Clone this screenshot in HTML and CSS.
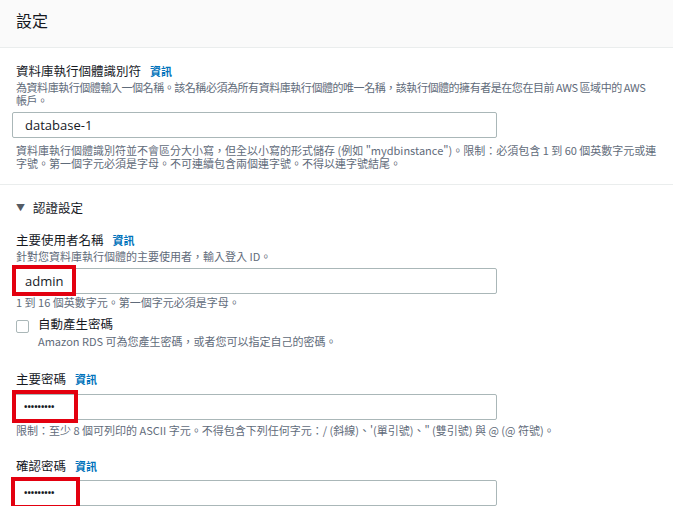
FILE: index.html
```html
<!DOCTYPE html>
<html lang="zh-Hant">
<head>
<meta charset="utf-8">
<link rel="stylesheet" href="styles.css">
</head>
<body>
<div class="hd"><h2 class="title">設定</h2></div>

<section class="sec sec1">
  <div class="label">資料庫執行個體識別符<a class="info">資訊</a></div>
  <div class="desc desc-tight">為資料庫執行個體輸入一個名稱。該名稱必須為所有資料庫執行個體的唯一名稱，該執行個體的擁有者是在您在目前 AWS 區域中的 AWS 帳戶。</div>
  <div class="field"><div class="input">database-1</div></div>
  <div class="help help-id">資料庫執行個體識別符並不會區分大小寫，但全以小寫的形式儲存 (例如 "mydbinstance")。限制：必須包含 1 到 60 個英數字元或連字號。第一個字元必須是字母。不可連續包含兩個連字號。不得以連字號結尾。</div>
</section>

<section class="sec sec2">
  <div class="expander"><span class="caret">▼</span>認證設定</div>

  <div class="label l-user">主要使用者名稱<a class="info">資訊</a></div>
  <div class="desc">針對您資料庫執行個體的主要使用者，輸入登入 ID。</div>
  <div class="field"><div class="input">admin</div><span class="mark mark-user"></span></div>
  <div class="help help-user">1 到 16 個英數字元。第一個字元必須是字母。</div>

  <div class="check">
    <span class="box"></span>
    <div class="check-text">
      <div class="check-label">自動產生密碼</div>
      <div class="desc">Amazon RDS 可為您產生密碼，或者您可以指定自己的密碼。</div>
    </div>
  </div>

  <div class="label l-pw">主要密碼<a class="info">資訊</a></div>
  <div class="field"><div class="input dots">•••••••••</div><span class="mark mark-pw"></span></div>
  <div class="help help-pw">限制：至少 8 個可列印的 ASCII 字元。不得包含下列任何字元：/ (斜線)、'(單引號)、" (雙引號) 與 @ (@ 符號)。</div>

  <div class="label l-cf">確認密碼<a class="info">資訊</a></div>
  <div class="field"><div class="input dots">•••••••••</div><span class="mark mark-cf"></span></div>
</section>
</body>
</html>
```
FILE: styles.css
```css
* { box-sizing: border-box; }
html, body { margin: 0; background: #fff; }
body {
  font-family: "Noto Sans CJK TC", "Open Sans", "Liberation Sans", sans-serif;
  color: #16191f;
  width: 673px;
  overflow: hidden;
}
.hd {
  height: 48px;
  background: #fafafa;
  border-bottom: 1px solid #eaeded;
  padding: 9px 16px 0;
}
.title {
  margin: 0;
  font-size: 16px;
  font-weight: 400;
  line-height: 22px;
}
.sec { padding: 0 16px; }
.sec1 {
  padding-top: 13px;
  padding-bottom: 14px;
  border-bottom: 1px solid #eaeded;
}
.label {
  font-size: 12.5px;
  line-height: 20px;
  display: flex;
  align-items: baseline;
}
.info {
  color: #0073bb;
  font-size: 11px;
  font-weight: 700;
  margin-left: 9px;
}
.desc, .help {
  font-size: 11px;
  line-height: 13px;
  color: #5f6b7a;
}
.desc-tight { letter-spacing: -0.45px; }
.field {
  position: relative;
  width: 485px;
  margin-left: -4px;
  margin-top: 5px;
}
.input {
  height: 26px;
  border: 1px solid #aab7b8;
  border-radius: 2px;
  padding: 0 12px;
  font-size: 13px;
  line-height: 24px;
  color: #16191f;
  font-family: "Open Sans", "Noto Sans CJK TC", sans-serif;
}
.input.dots {
  font-size: 9px;
  font-weight: 700;
  line-height: 24px;
  padding-left: 11px;
}
.help { margin-top: 5px; }
.help-id { margin-top: 6px; }
.mark {
  position: absolute;
  border: 4px solid #e3000f;
}
.mark-user { left: 0; top: -3px; width: 64px; height: 31px; }
.mark-pw { left: 0; top: -4px; width: 66px; height: 33px; }
.mark-cf { left: -1px; top: -3px; width: 69px; height: 32px; }

.sec2 { padding-top: 13px; }
.expander {
  font-size: 12.5px;
  line-height: 20px;
  color: #16191f;
  display: flex;
  align-items: center;
}
.caret {
  font-size: 9px;
  color: #545b64;
  width: 17px;
}
.l-user { margin-top: 12px; }
.help-user { margin-top: 2px; }
.check {
  display: flex;
  margin-top: 7px;
}
.box {
  width: 13px;
  height: 13px;
  border: 1px solid #aab7b8;
  border-radius: 2px;
  margin-top: 4px;
  margin-right: 9px;
  background: #fff;
  flex: none;
}
.check-label {
  font-size: 12.5px;
  line-height: 16px;
  margin-bottom: 3px;
}
.l-pw { margin-top: 21px; }
.help-pw { margin-top: 4px; }
.l-cf { margin-top: 19px; }
.l-cf + .field { margin-top: 4px; }
```
